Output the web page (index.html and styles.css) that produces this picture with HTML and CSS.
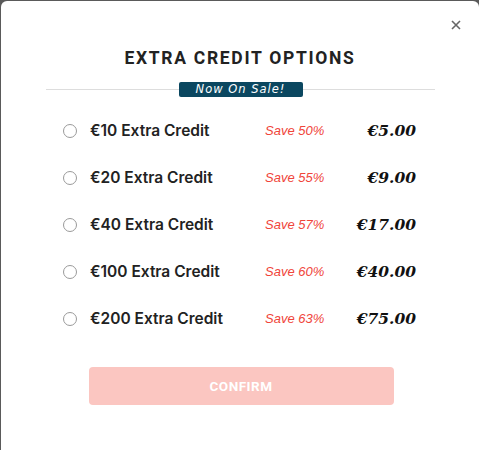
FILE: index.html
```html
<!DOCTYPE html>
<html>
<head>
<meta charset="utf-8">
<link rel="stylesheet" href="styles.css">
</head>
<body>
<div class="modal">
  <button class="close" aria-label="Close">
    <svg width="10" height="10" viewBox="0 0 10 10"><path d="M1 1L9 9M9 1L1 9" stroke="#666" stroke-width="1.6"/></svg>
  </button>
  <h2 class="title">EXTRA CREDIT OPTIONS</h2>
  <div class="divider"><span class="badge">Now On Sale!</span></div>
  <ul class="options">
    <li class="option"><span class="radio"></span><span class="label">€10 Extra Credit</span><span class="save">Save 50%</span><span class="price">€5.00</span></li>
    <li class="option"><span class="radio"></span><span class="label">€20 Extra Credit</span><span class="save">Save 55%</span><span class="price">€9.00</span></li>
    <li class="option"><span class="radio"></span><span class="label">€40 Extra Credit</span><span class="save">Save 57%</span><span class="price">€17.00</span></li>
    <li class="option"><span class="radio"></span><span class="label">€100 Extra Credit</span><span class="save">Save 60%</span><span class="price">€40.00</span></li>
    <li class="option"><span class="radio"></span><span class="label">€200 Extra Credit</span><span class="save">Save 63%</span><span class="price">€75.00</span></li>
  </ul>
  <div class="actions"><button class="confirm">CONFIRM</button></div>
</div>
</body>
</html>
```
FILE: styles.css
```css
html, body { margin: 0; padding: 0; }
body {
  background: #5a5a5a;
  width: 479px;
  height: 450px;
  overflow: hidden;
}
.modal {
  position: relative;
  margin: 1px 0 0 1px;
  width: 478px;
  height: 449px;
  background: #fff;
  border-radius: 6px 6px 0 0;
  display: flex;
  flex-direction: column;
}
.close {
  position: absolute;
  top: 19px;
  right: 18px;
  width: 10px;
  height: 10px;
  padding: 0;
  border: 0;
  background: none;
  display: flex;
}
.title {
  margin: 47px 0 0;
  text-align: center;
  font-family: Roboto, sans-serif;
  font-weight: 700;
  font-size: 17.5px;
  line-height: 20px;
  letter-spacing: 1.7px;
  color: #222;
}
.divider {
  margin: 14px 44px 0 45px;
  height: 15px;
  display: flex;
  justify-content: center;
  align-items: center;
  background: linear-gradient(#ddd, #ddd) center / 100% 1px no-repeat;
}
.badge {
  width: 124px;
  height: 15px;
  background: #0b4760;
  border-radius: 2px;
  color: #fff;
  font-family: "DejaVu Sans", sans-serif;
  font-style: italic;
  font-size: 11.5px;
  line-height: 15px;
  letter-spacing: 1px;
  text-align: center;
}
.options {
  list-style: none;
  margin: 10px 0 0;
  padding: 0 64px 0 62px;
}
.option {
  height: 47px;
  display: flex;
  align-items: center;
}
.radio {
  width: 14px;
  height: 14px;
  box-sizing: border-box;
  border: 1px solid #9a9a9a;
  border-radius: 50%;
  margin-right: 13px;
  flex: none;
}
.label {
  width: 175px;
  font-family: Inter, sans-serif;
  font-weight: 600;
  font-size: 15.5px;
  color: #222;
}
.save {
  font-family: "Liberation Sans", sans-serif;
  font-style: italic;
  font-size: 13px;
  color: #f0453a;
}
.price {
  margin-left: auto;
  margin-right: -1px;
  font-family: "DejaVu Serif", serif;
  font-style: italic;
  font-weight: 700;
  font-size: 15.5px;
  color: #111;
}
.actions {
  margin-top: 25px;
  display: flex;
  justify-content: center;
  padding-left: 2px;
}
.confirm {
  width: 305px;
  height: 38px;
  border: 0;
  border-radius: 4px;
  background: #fbc6c1;
  color: #fff;
  font-family: Roboto, sans-serif;
  font-weight: 700;
  font-size: 13.5px;
  letter-spacing: 0.5px;
}
```
